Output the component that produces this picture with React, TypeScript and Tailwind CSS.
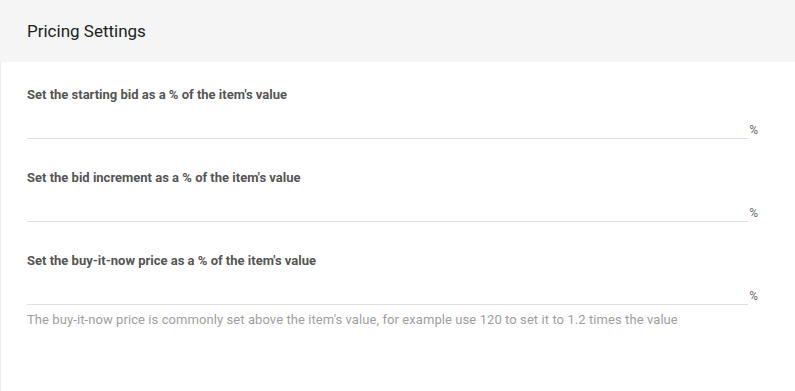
import React from "react";

const fields = [
  { label: "Set the starting bid as a % of the item's value" },
  { label: "Set the bid increment as a % of the item's value" },
  {
    label: "Set the buy-it-now price as a % of the item's value",
    help: "The buy-it-now price is commonly set above the item's value, for example use 120 to set it to 1.2 times the value",
  },
];

export default function App() {
  return (
    <div
      className="w-[795px] h-[391px] bg-white flex flex-col"
      style={{ fontFamily: "Roboto, 'Liberation Sans', sans-serif" }}
    >
      <div className="h-[62px] shrink-0 bg-[#f5f5f5] flex items-center px-[27px] pt-[2px] text-[17px] text-[#212121]">
        Pricing Settings
      </div>
      <div className="flex-1 border-l border-[#ececec] pl-[26px] pr-[37px] pt-[24px] flex flex-col gap-[30px]">
        {fields.map((f, i) => (
          <div key={i} className="flex flex-col">
            <div className="text-[13px] leading-[18px] font-bold text-[#555555]">{f.label}</div>
            <div className="flex items-end">
              <div className="flex-1 h-[35px] border-b border-[#e0e0e0]" />
              <span className="ml-[1px] text-[12px] leading-[14px] text-[#6b6b6b] mb-[2px]">%</span>
            </div>
            {f.help && (
              <div className="mt-[6px] text-[13px] leading-[18px] tracking-[0.08px] text-[#9e9e9e]">{f.help}</div>
            )}
          </div>
        ))}
      </div>
    </div>
  );
}
